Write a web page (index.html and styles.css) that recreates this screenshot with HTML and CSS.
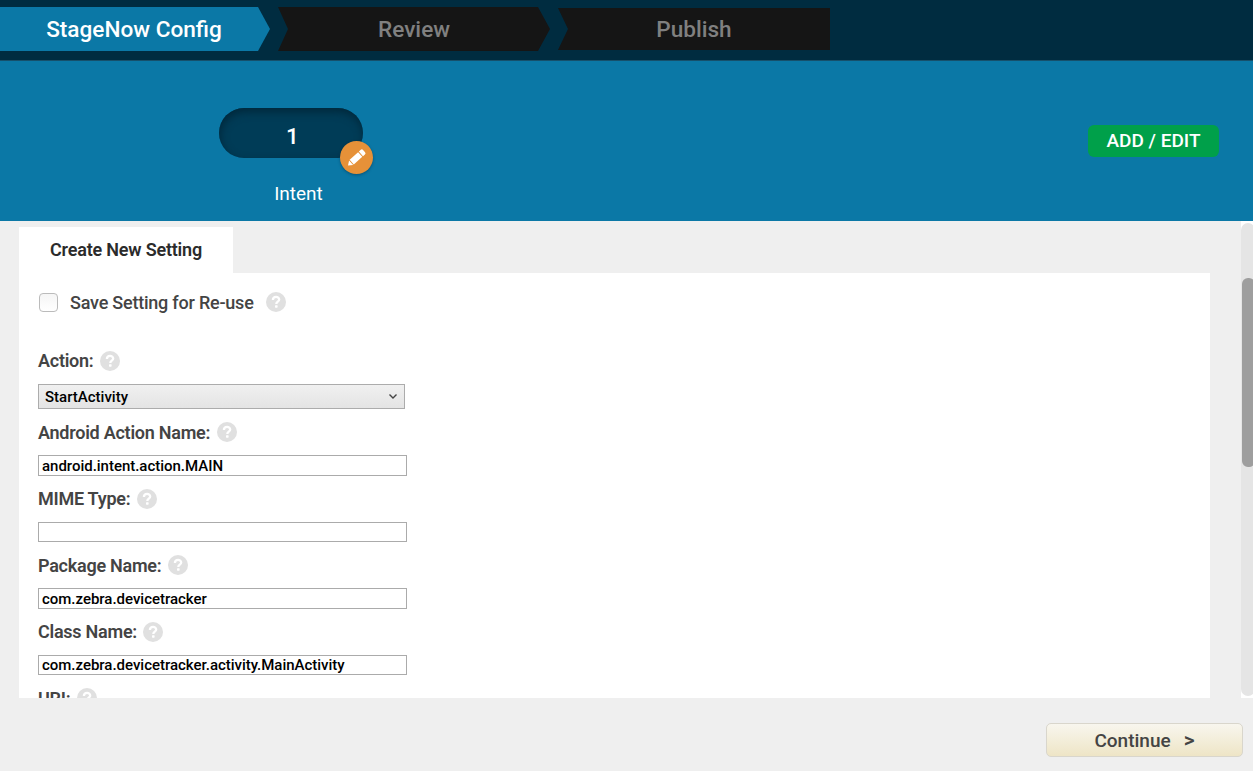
FILE: index.html
```html
<!DOCTYPE html>
<html lang="en">
<head>
<meta charset="utf-8">
<title>StageNow Config</title>
<link rel="stylesheet" href="styles.css">
</head>
<body>
<svg class="sprite" width="0" height="0" aria-hidden="true">
  <symbol id="help" viewBox="0 0 20 20">
    <circle cx="10" cy="10" r="10" fill="#e0e0e0"/>
    <path d="M6.9 8.1C6.9 3.8 13.2 4.1 13.2 7.5C13.2 9.7 10.3 9.5 10.3 11.9" fill="none" stroke="#fff" stroke-width="2.3"/>
    <rect x="9" y="13.2" width="2.6" height="2.5" rx=".6" fill="#fff"/>
  </symbol>
</svg>
<header class="steps">
  <div class="step step-active"><span>StageNow Config</span></div>
  <div class="step step-next"><span>Review</span></div>
  <div class="step step-last"><span>Publish</span></div>
</header>
<section class="banner">
  <div class="node">
    <div class="pill"><span>1</span>
      <div class="edit">
        <svg width="33" height="33" viewBox="0 0 33 33"><g transform="translate(8 24.5) rotate(-42)" fill="#fff"><path d="M0 0L4.2-3V3Z"/><path d="M5-3.1H16.4V3.1H5Z"/><path d="M17.4-3.1H20Q21.6-3.1 21.6-1.5V1.5Q21.6 3.1 20 3.1H17.4Z"/></g></svg>
      </div>
    </div>
    <div class="node-name">Intent</div>
  </div>
  <button class="add">ADD / EDIT</button>
</section>
<main class="content">
  <div class="sheet">
    <div class="tab"><span>Create New Setting</span></div>
    <div class="panel">
      <div class="save"><i class="check"></i><span class="save-label">Save Setting for Re-use</span><svg class="help"><use href="#help"/></svg></div>
      <div class="fields">
        <div class="label"><span>Action:</span><svg class="help"><use href="#help"/></svg></div>
        <div class="select"><span>StartActivity</span><svg width="10" height="8" viewBox="0 0 10 8"><path d="M1.5 1.5L5 5L8.5 1.5" fill="none" stroke="#444" stroke-width="1.4"/></svg></div>
        <div class="label low"><span>Android Action Name:</span><svg class="help"><use href="#help"/></svg></div>
        <div class="input low"><span>android.intent.action.MAIN</span></div>
        <div class="label"><span>MIME Type:</span><svg class="help"><use href="#help"/></svg></div>
        <div class="input"></div>
        <div class="label low"><span>Package Name:</span><svg class="help"><use href="#help"/></svg></div>
        <div class="input low"><span>com.zebra.devicetracker</span></div>
        <div class="label"><span>Class Name:</span><svg class="help"><use href="#help"/></svg></div>
        <div class="input"><span>com.zebra.devicetracker.activity.MainActivity</span></div>
        <div class="label low"><span>URI:</span><svg class="help"><use href="#help"/></svg></div>
      </div>
    </div>
  </div>
  <div class="scroll"><div class="track"><div class="thumb"></div></div></div>
</main>
<footer class="footer"><button class="continue"><span>Continue</span><span class="arrow">&gt;</span></button></footer>
</body>
</html>
```
FILE: styles.css
```css
* { box-sizing: border-box; }
body {
  margin: 0;
  height: 771px;
  overflow: hidden;
  display: flex;
  flex-direction: column;
  background: #efefef;
  font-family: Roboto, "Liberation Sans", sans-serif;
  font-weight: 500;
  color: #444;
  white-space: nowrap;
}
button { font: inherit; border: 0; padding: 0; }
.sprite { display: none; }

.steps {
  flex: none;
  height: 61px;
  padding-top: 7px;
  display: flex;
  gap: 8px;
  background: #002c40;
  border-bottom: 1px solid #16506b;
}
.step {
  height: 44px;
  display: flex;
  align-items: center;
  justify-content: center;
  font-size: 22.6px;
  background: #151515;
  color: #808080;
}
.step-active {
  width: 270px;
  padding-right: 2px;
  background: #0b78a6;
  color: #fff;
  clip-path: polygon(0 0, 258px 0, 100% 50%, 258px 100%, 0 100%);
}
.step-next {
  width: 272px;
  clip-path: polygon(0 0, 260px 0, 100% 50%, 260px 100%, 0 100%, 10px 50%);
}
.step-last {
  width: 272px;
  height: 42px;
  margin-top: 1px;
  clip-path: polygon(0 0, 100% 0, 100% 100%, 0 100%, 10px 50%);
}

.banner {
  flex: none;
  height: 160px;
  padding: 47px 34px 0 219px;
  display: flex;
  align-items: flex-start;
  justify-content: space-between;
  background: #0b78a6;
  color: #fff;
}
.pill {
  position: relative;
  width: 144px;
  height: 50px;
  padding: 7px 0 0 3px;
  display: flex;
  align-items: center;
  justify-content: center;
  border-radius: 25px;
  background: #003c57;
  box-shadow: inset 1px 4px 8px #00283b;
  font-size: 22.6px;
}
.edit {
  position: absolute;
  left: 121px;
  top: 33px;
  width: 33px;
  height: 33px;
  border-radius: 50%;
  background: #e69138;
  box-shadow: 0 1px 3px rgba(0, 30, 50, .4);
}
.edit svg { display: block; }
.node-name {
  margin-top: 24px;
  padding-left: 15px;
  line-height: 24px;
  text-align: center;
  font-size: 19px;
  font-weight: 400;
}
.add {
  width: 131px;
  height: 32px;
  margin-top: 17px;
  padding-bottom: 2px;
  border-radius: 6px;
  background: #00a04a;
  color: #fff;
  font-size: 19px;
}

.content {
  flex: none;
  height: 477px;
  display: flex;
  justify-content: space-between;
  overflow: hidden;
}
.sheet { width: 1191px; margin: 6px 0 0 19px; }
.tab {
  width: 214px;
  height: 46px;
  padding-bottom: 2px;
  display: flex;
  align-items: center;
  justify-content: center;
  background: #fff;
  color: #2b2b2b;
  font-size: 18px;
  font-weight: 600;
  letter-spacing: -.2px;
}
.panel { height: 430px; padding: 19px 0 0 19px; background: #fff; }
.save { height: 20px; display: flex; align-items: center; font-size: 18px; letter-spacing: -.22px; }
.check {
  width: 19px;
  height: 19px;
  margin: 0 12px 0 1px;
  border: 1px solid #bbb;
  border-radius: 4px;
  background: linear-gradient(#f5f5f5, #fff);
}
.help { flex: none; width: 20px; height: 20px; margin-left: 6.5px; }
.save .help { margin-left: 12px; }
.fields { margin-top: 39px; display: flex; flex-direction: column; }
.label {
  height: 20px;
  display: flex;
  align-items: center;
  font-size: 18px;
  font-weight: 600;
  letter-spacing: -.25px;
}
.label span { margin-top: -1px; }
.label.low span { margin-top: 1px; }
.select {
  width: 367px;
  height: 25px;
  margin: 13px 0;
  padding: 0 6px 0 6px;
  display: flex;
  align-items: center;
  justify-content: space-between;
  border: 1px solid #acacac;
  background: linear-gradient(#f0f0f0, #e4e4e4);
  color: #000;
  font-size: 15px;
}
.input {
  width: 369px;
  height: 20.5px;
  margin: 13px 0;
  padding-left: 3px;
  display: flex;
  align-items: center;
  border: 1px solid #ababab;
  background: #fff;
  color: #000;
  font-size: 15px;
  letter-spacing: -.02px;
}
.input.low { padding-top: 1px; }
.scroll { width: 12px; padding-top: 2px; background: #fff; overflow: hidden; }
.track { width: 14px; height: 473px; padding: 55px 0 0 1px; border-radius: 7px; background: #e5e5e5; }
.thumb { width: 13px; height: 189px; border-radius: 6px; background: #9e9e9e; }

.footer { flex: 1; padding: 25px 10px 0 0; display: flex; justify-content: flex-end; }
.continue {
  width: 197px;
  height: 34px;
  display: flex;
  align-items: center;
  justify-content: center;
  gap: 13px;
  border: 1px solid #d9d6cc;
  border-radius: 5px;
  background: linear-gradient(#f8f6ee, #eee5c6);
  color: #444;
  font-size: 19px;
}
.arrow { font-weight: 600; font-size: 21px; }
```
